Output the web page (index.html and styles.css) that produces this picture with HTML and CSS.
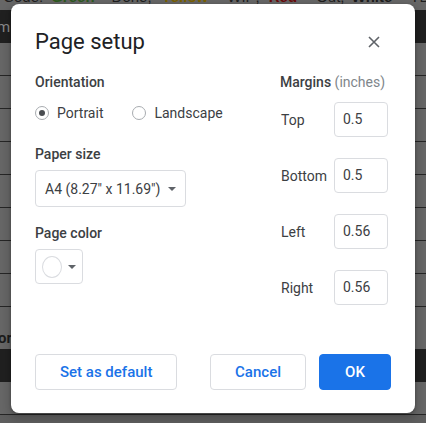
FILE: index.html
```html
<!DOCTYPE html>
<html>
<head>
<meta charset="utf-8">
<link rel="stylesheet" href="styles.css">
</head>
<body>
<div class="sheet">
  <div class="legend"><span class="w1">r Code:</span><span class="w2 green">Green</span><span class="w3">Done;</span><span class="w4 yellow">Yellow</span><span class="w5">WIP;</span><span class="w6 red">Red</span><span class="w7">Out;</span><span class="w8 white">White</span><span class="w9">TBD;</span></div>
  <div class="band"><span class="bandtext">m</span></div>
  <div class="row"></div>
  <div class="row"></div>
  <div class="row"></div>
  <div class="row"></div>
  <div class="row"></div>
  <div class="row"></div>
  <div class="row"></div>
  <div class="row"></div>
  <div class="row tall"><span class="rowtext">or</span></div>
  <div class="band"></div>
  <div class="row"></div>
  <div class="foot"></div>
</div>

<div class="dialog">
  <div class="header">
    <h1 class="title">Page setup</h1>
    <button class="close" aria-label="Close">
      <svg width="12" height="12" viewBox="0 0 12 12"><path d="M1 1 L11 11 M11 1 L1 11" stroke="#5f6368" stroke-width="1.6" fill="none"/></svg>
    </button>
  </div>
  <div class="body">
    <div class="left">
      <div class="label">Orientation</div>
      <div class="radios">
        <label class="radio"><span class="dot on"></span>Portrait</label>
        <label class="radio"><span class="dot"></span>Landscape</label>
      </div>
      <div class="label gap-lg">Paper size</div>
      <div class="select"><span>A4 (8.27" x 11.69")</span><span class="caret"></span></div>
      <div class="label gap-md">Page color</div>
      <div class="colorbtn"><span class="swatch"></span><span class="caret"></span></div>
    </div>
    <div class="right">
      <div class="label">Margins <span class="unit">(inches)</span></div>
      <div class="margins">
        <div class="mrow"><span>Top</span><div class="input">0.5</div></div>
        <div class="mrow"><span>Bottom</span><div class="input">0.5</div></div>
        <div class="mrow"><span>Left</span><div class="input">0.56</div></div>
        <div class="mrow"><span>Right</span><div class="input">0.56</div></div>
      </div>
    </div>
  </div>
  <div class="footer">
    <button class="btn">Set as default</button>
    <div class="actions">
      <button class="btn">Cancel</button>
      <button class="btn primary">OK</button>
    </div>
  </div>
</div>
</body>
</html>
```
FILE: styles.css
```css
html, body {
  margin: 0;
  padding: 0;
}
body {
  width: 426px;
  height: 423px;
  overflow: hidden;
  background: #5e5e5e;
  font-family: Roboto, "Liberation Sans", sans-serif;
  position: relative;
}
.sheet {
  width: 426px;
}
.legend {
  height: 10px;
  background: #676767;
  overflow: hidden;
  white-space: nowrap;
  font-family: "Liberation Sans", Arial, sans-serif;
  font-size: 15px;
  line-height: 15px;
  color: #1e1e1e;
  display: flex;
}
.legend span {
  margin-top: -11px;
  display: block;
}
.w1 { margin-left: -6px; }
.w2 { margin-left: 8px; }
.w3 { margin-left: 17px; }
.w4 { margin-left: 10px; }
.w5 { margin-left: 19px; }
.w6 { margin-left: 9px; }
.w7 { margin-left: 19px; }
.w8 { margin-left: 7px; }
.w9 { margin-left: 18px; }
.green { color: #2d5a1e; font-weight: bold; }
.yellow { color: #7a6000; font-weight: bold; }
.red { color: #6a0a0a; font-weight: bold; }
.white { color: #1c1c1c; font-weight: bold; }
.band {
  height: 33px;
  background: #202020;
  overflow: hidden;
}
.bandtext {
  display: block;
  margin-left: -3px;
  padding-top: 8px;
  font-size: 15px;
  color: #8a8a8a;
}
.row {
  height: 32px;
  background: #676767;
  border-bottom: 1px solid #262626;
}
.row.tall {
  height: 42px;
  border-bottom: none;
  overflow: hidden;
}
.rowtext {
  display: block;
  margin-left: -2px;
  padding-top: 22px;
  font-size: 15px;
  font-weight: bold;
  color: #1c1c1c;
}
.foot {
  height: 20px;
  background: #5e5e5e;
}

.dialog {
  position: absolute;
  left: 11px;
  top: 4px;
  width: 404px;
  height: 409px;
  box-sizing: border-box;
  padding: 24px 24px 23px;
  background: #fff;
  border-radius: 8px;
  box-shadow: 0 4px 8px 3px rgba(0,0,0,0.15), 0 1px 3px rgba(0,0,0,0.3);
  display: flex;
  flex-direction: column;
  color: #3c4043;
  font-size: 14px;
}
.header {
  height: 28px;
  display: flex;
  align-items: center;
  justify-content: space-between;
}
.title {
  margin: 0;
  font-size: 22px;
  font-weight: 400;
  line-height: 28px;
  color: #202124;
}
.close {
  width: 24px;
  height: 24px;
  margin-right: 5px;
  padding: 0;
  border: none;
  background: none;
  display: flex;
  align-items: center;
  justify-content: center;
}
.body {
  margin-top: 16px;
  display: flex;
  justify-content: space-between;
}
.left {
  display: flex;
  flex-direction: column;
  align-items: flex-start;
}
.label {
  font-size: 14px;
  font-weight: 500;
  line-height: 20px;
  color: #3c4043;
}
.unit {
  font-weight: 400;
  color: #80868b;
}
.gap-lg { margin-top: 21px; }
.gap-md { margin-top: 16px; }
.radios {
  margin-top: 11px;
  height: 20px;
  display: flex;
  align-items: center;
  gap: 29px;
}
.radio {
  display: flex;
  align-items: center;
  gap: 8px;
  line-height: 20px;
  color: #3c4043;
}
.dot {
  width: 14px;
  height: 14px;
  box-sizing: border-box;
  border: 1.5px solid #a8acb0;
  border-radius: 50%;
  display: flex;
  align-items: center;
  justify-content: center;
}
.dot.on::after {
  content: "";
  width: 6px;
  height: 6px;
  border-radius: 50%;
  background: #4a4d51;
}
.select {
  margin-top: 6px;
  height: 37px;
  box-sizing: border-box;
  padding: 0 9px;
  border: 1px solid #dadce0;
  border-radius: 4px;
  display: inline-flex;
  align-items: center;
  gap: 8px;
  color: #3c4043;
}
.caret {
  width: 0;
  height: 0;
  border-left: 4px solid transparent;
  border-right: 4px solid transparent;
  border-top: 4px solid #5f6368;
}
.colorbtn {
  margin-top: 6px;
  width: 48px;
  height: 35px;
  box-sizing: border-box;
  padding: 0 6px 0 6px;
  border: 1px solid #dadce0;
  border-radius: 4px;
  display: flex;
  align-items: center;
  gap: 6px;
}
.swatch {
  width: 22px;
  height: 22px;
  box-sizing: border-box;
  border: 1px solid #dadce0;
  border-radius: 50%;
  background: #fff;
}
.right {
  width: 108px;
  margin-right: 3px;
}
.margins {
  margin-top: 10px;
  display: flex;
  flex-direction: column;
  gap: 21px;
}
.mrow {
  height: 35px;
  display: flex;
  align-items: center;
  justify-content: space-between;
  padding-left: 1px;
}
.input {
  width: 54px;
  height: 35px;
  box-sizing: border-box;
  padding-left: 8px;
  border: 1px solid #dadce0;
  border-radius: 4px;
  line-height: 33px;
  color: #3c4043;
}
.footer {
  margin-top: auto;
  display: flex;
  justify-content: space-between;
}
.actions {
  display: flex;
  gap: 13px;
}
.btn {
  height: 36px;
  min-width: 72px;
  box-sizing: border-box;
  padding: 0 24px;
  border: 1px solid #dadce0;
  border-radius: 4px;
  background: #fff;
  font-family: Roboto, "Liberation Sans", sans-serif;
  font-size: 15px;
  font-weight: 500;
  color: #1a73e8;
}
.btn.primary {
  background: #1a73e8;
  border-color: #1a73e8;
  color: #fff;
}
```
